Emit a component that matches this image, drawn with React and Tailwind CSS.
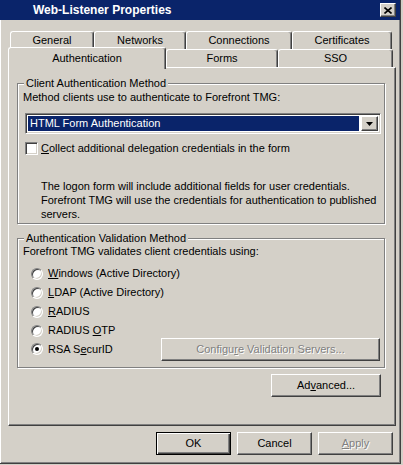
import React from 'react';

const raised = 'border border-t-white border-l-white border-r-[#404040] border-b-[#404040] shadow-[inset_-1px_-1px_0_#808080]';
const sunken = 'border border-t-[#808080] border-l-[#808080] border-r-white border-b-white shadow-[inset_1px_1px_0_#404040,inset_-1px_-1px_0_#d4d0c8]';
const etched = 'border border-[#808080] shadow-[inset_1px_1px_0_white,1px_1px_0_white]';
const tabEdge = 'border-t border-l border-r border-t-white border-l-white border-r-[#404040] shadow-[inset_-1px_0_0_#808080] rounded-t-[3px]';
const disabled = 'text-[#808080] [text-shadow:1px_1px_0_white]';

const Tab = ({ label, width, className = '' }) => (
  <div className={`flex items-center justify-center h-[18px] ${tabEdge} ${width} ${className}`}>{label}</div>
);

const Radio = ({ checked, children }) => (
  <div className="flex items-center gap-[5px]">
    <div className={`w-[12px] h-[12px] rounded-full bg-white flex items-center justify-center border border-t-[#808080] border-l-[#808080] border-r-white border-b-white shadow-[inset_1px_1px_0_#404040,inset_-1px_-1px_0_#d4d0c8]`}>
      {checked && <div className="w-[4px] h-[4px] rounded-full bg-black" />}
    </div>
    <span>{children}</span>
  </div>
);

const Button = ({ children, className = '', isDefault }) => (
  <div
    className={`flex items-center justify-center h-[23px] bg-[#d4d0c8] ${
      isDefault
        ? 'border border-black shadow-[inset_1px_1px_0_white,inset_-1px_-1px_0_#404040,inset_-2px_-2px_0_#808080]'
        : raised
    } ${className}`}
  >
    {children}
  </div>
);

const App = () => {
  return (
    <div className="w-[403px] h-[465px] bg-[#d4d0c8] font-['Liberation_Sans',Arial,sans-serif] text-[11px] leading-[13px] text-black select-none">
      <div className="w-[401px] h-[464px] flex flex-col border-r border-b border-r-[#404040] border-b-[#404040] shadow-[inset_1px_0_0_white,inset_-1px_-1px_0_#808080]">
        {/* title bar */}
        <div className="h-[20px] w-[400px] bg-[#0a246a] flex items-center pl-[33px] pr-[4px]">
          <span className="text-white font-bold text-[12px]">Web-Listener Properties</span>
          <div className={`ml-auto w-[16px] h-[14px] bg-[#d4d0c8] flex items-center justify-center ${raised}`}>
            <svg width="8" height="7" viewBox="0 0 8 7">
              <path d="M0.5 0.5 L7.5 6.5 M7.5 0.5 L0.5 6.5" stroke="black" strokeWidth="1.6" />
            </svg>
          </div>
        </div>

        {/* tabs */}
        <div className="mt-[11px] flex ml-[10px]">
          <Tab label="General" width="w-[84px]" />
          <Tab label="Networks" width="w-[92px]" />
          <Tab label="Connections" width="w-[106px]" />
          <Tab label="Certificates" width="w-[100px]" />
        </div>
        <div className="flex ml-[8px] -mt-[2px] h-[20px] relative">
          <div className={`relative z-10 bg-[#d4d0c8] flex justify-center pt-[4px] h-[22px] w-[158px] ${tabEdge}`}>Authentication</div>
          <Tab label="Forms" width="w-[112px]" className="mt-[2px] bg-[#d4d0c8]" />
          <Tab label="SSO" width="w-[115px]" className="mt-[2px] bg-[#d4d0c8]" />
        </div>

        {/* tab panel */}
        <div className={`ml-[8px] w-[388px] h-[359px] flex flex-col pl-[8px] ${raised}`}>
          {/* client auth group */}
          <div className={`mt-[15px] w-[368px] h-[141px] flex flex-col ${etched}`}>
            <span className="self-start -mt-[7px] ml-[6px] px-[2px] bg-[#d4d0c8]">Client Authentication Method</span>
            <div className="mt-[1px] pl-[5px]">Method clients use to authenticate to Forefront TMG:</div>
            <div className={`mt-[9px] ml-[7px] w-[356px] h-[21px] flex bg-white ${sunken}`}>
              <div className="flex-1 m-[2px] mr-0 bg-[#0a246a] text-white flex items-center pl-[2px]">HTML Form Authentication</div>
              <div className={`w-[17px] m-[2px] flex items-center justify-center bg-[#d4d0c8] ${raised}`}>
                <svg width="7" height="4" viewBox="0 0 7 4">
                  <path d="M0 0 H7 L3.5 4 Z" fill="black" />
                </svg>
              </div>
            </div>
            <div className="mt-[8px] ml-[7px] flex items-center gap-[3px]">
              <div className={`w-[13px] h-[13px] bg-white ${sunken}`} />
              <span><u>C</u>ollect additional delegation credentials in the form</span>
            </div>
            <p className="mt-[24px] pl-[23px] leading-[14px]">
              The logon form will include additional fields for user credentials.<br />
              Forefront TMG will use the credentials for authentication to published<br />
              servers.
            </p>
          </div>

          {/* validation group */}
          <div className={`mt-[14px] w-[368px] h-[130px] flex flex-col ${etched}`}>
            <span className="self-start -mt-[7px] ml-[6px] px-[2px] bg-[#d4d0c8]">Authentication Validation Method</span>
            <div className="pl-[5px]">Forefront TMG validates client credentials using:</div>
            <div className="mt-[6px] pl-[13px] flex flex-col">
              <div className="h-[19px] flex items-center"><Radio><u>W</u>indows (Active Directory)</Radio></div>
              <div className="h-[19px] flex items-center"><Radio><u>L</u>DAP (Active Directory)</Radio></div>
              <div className="h-[19px] flex items-center"><Radio><u>R</u>ADIUS</Radio></div>
              <div className="h-[19px] flex items-center"><Radio>RADIUS <u>O</u>TP</Radio></div>
              <div className="h-[22px] -mt-[2px] flex items-center">
                <Radio checked>RSA S<u>e</u>curID</Radio>
                <Button className={`ml-auto mr-[4px] w-[219px] h-[22px] ${disabled}`}>
                  <span>Configu<u>r</u>e Validation Servers...</span>
                </Button>
              </div>
            </div>
          </div>

          <div className="mt-[6px] w-[368px] flex justify-end pr-[4px]">
            <Button className="w-[110px]"><span>Ad<u>v</u>anced...</span></Button>
          </div>
        </div>

        {/* dialog buttons */}
        <div className="mt-[6px] flex justify-end gap-[6px] pr-[7px]">
          <Button isDefault className="w-[75px]">OK</Button>
          <Button className="w-[75px]">Cancel</Button>
          <Button className={`w-[75px] ${disabled}`}><span><u>A</u>pply</span></Button>
        </div>
      </div>
    </div>
  );
};

export default App;
